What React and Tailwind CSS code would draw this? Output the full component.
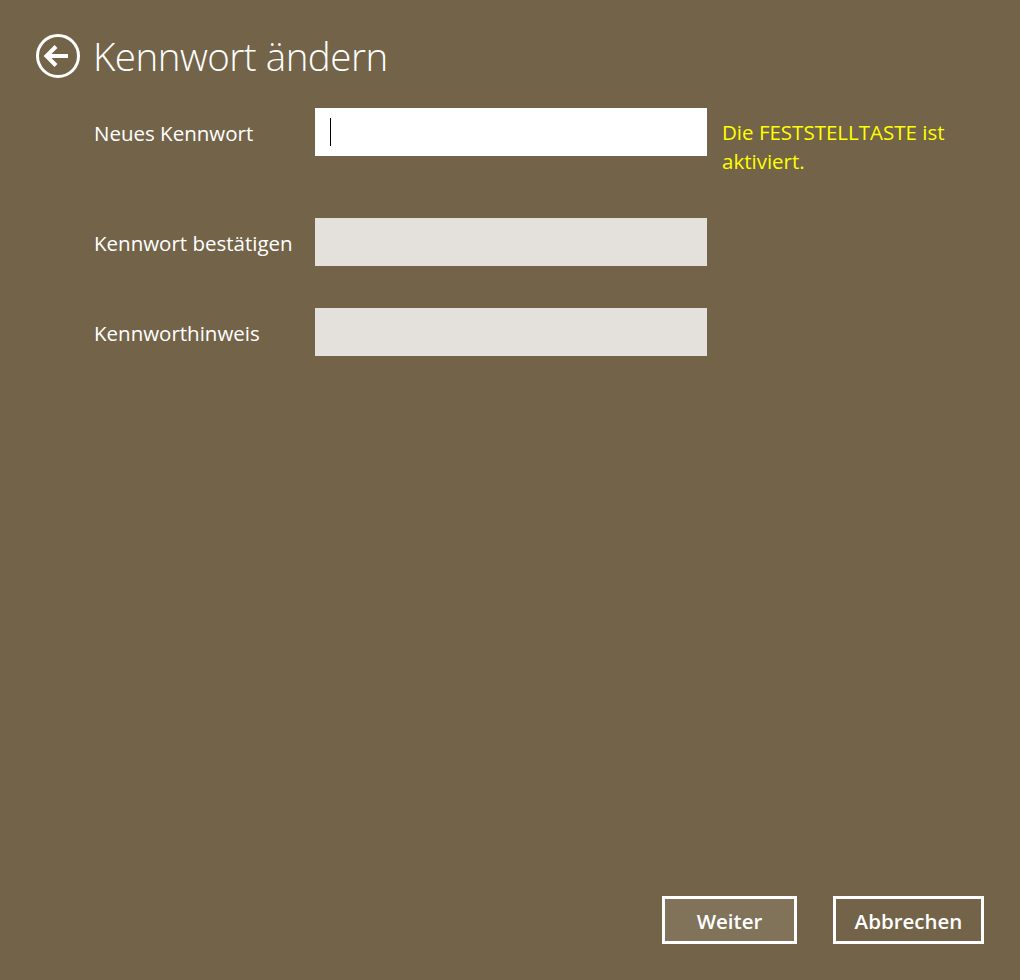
export default function App() {
  return (
    <div
      className="w-[1020px] h-[980px] bg-[#736449] text-white flex flex-col"
      style={{ fontFamily: '"Open Sans", "Noto Sans", sans-serif' }}
    >
      {/* Kopfzeile */}
      <div className="flex items-center h-[56px] mt-[28px] pl-[35px] gap-[12px]">
        <button className="w-[46px] h-[46px] flex items-center justify-center">
          <svg width="46" height="46" viewBox="0 0 46 46" fill="none" stroke="white">
            <circle cx="23" cy="23" r="20.5" strokeWidth="3" />
            <path d="M12 23 H33" strokeWidth="4" />
            <path d="M21 13.5 L11.5 23 L21 32.5" strokeWidth="4" />
          </svg>
        </button>
        <h1 className="text-[38.5px] font-light leading-none tracking-[-0.5px]">Kennwort ändern</h1>
      </div>

      {/* Formular */}
      <div className="flex flex-col gap-[42px] mt-[24px] pl-[94px]">
        <div className="flex items-start">
          <label className="w-[221px] h-[48px] flex items-center text-[20.5px] pt-[2px]">Neues Kennwort</label>
          <div className="w-[392px] h-[48px] bg-white flex items-center pl-[15px]">
            <div className="w-px h-[28px] bg-black"></div>
          </div>
          <p className="ml-[15px] pt-[10px] w-[270px] text-[20.5px] leading-[29px] text-[#ffff00]">
            Die FESTSTELLTASTE ist<br />aktiviert.
          </p>
        </div>

        <div className="flex items-center">
          <label className="w-[221px] text-[20.5px] pt-[2px]">Kennwort bestätigen</label>
          <div className="w-[392px] h-[48px] bg-[#e4e1dc]"></div>
        </div>

        <div className="flex items-center">
          <label className="w-[221px] text-[20.5px] pt-[2px]">Kennworthinweis</label>
          <div className="w-[392px] h-[48px] bg-[#e4e1dc]"></div>
        </div>
      </div>

      {/* Schaltflächen */}
      <div className="mt-auto mb-[36px] flex justify-end gap-[36px] pr-[36px]">
        <button className="w-[135px] h-[48px] border-[3px] border-white bg-[#807359] text-[20.5px] font-semibold pt-[2px]">
          Weiter
        </button>
        <button className="w-[151px] h-[48px] border-[3px] border-white bg-[#736449] text-[20.5px] font-semibold pt-[2px]">
          Abbrechen
        </button>
      </div>
    </div>
  );
}
